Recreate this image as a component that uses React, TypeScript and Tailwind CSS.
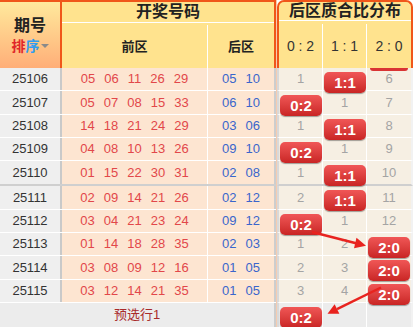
import React from 'react';

type Cell = string | { badge: string };

interface DrawRow {
  no: string;
  front: string[];
  back: string[];
  ratio: Cell[];
}

const rows: DrawRow[] = [
  { no: '25106', front: ['05', '06', '11', '26', '29'], back: ['05', '10'], ratio: ['1', { badge: '1:1' }, '6'] },
  { no: '25107', front: ['05', '07', '08', '15', '33'], back: ['06', '10'], ratio: [{ badge: '0:2' }, '1', '7'] },
  { no: '25108', front: ['14', '18', '21', '24', '29'], back: ['03', '06'], ratio: ['1', { badge: '1:1' }, '8'] },
  { no: '25109', front: ['04', '08', '10', '13', '26'], back: ['09', '10'], ratio: [{ badge: '0:2' }, '1', '9'] },
  { no: '25110', front: ['01', '15', '22', '30', '31'], back: ['02', '08'], ratio: ['1', { badge: '1:1' }, '10'] },
  { no: '25111', front: ['02', '09', '14', '21', '26'], back: ['02', '12'], ratio: ['2', { badge: '1:1' }, '11'] },
  { no: '25112', front: ['03', '04', '21', '23', '24'], back: ['09', '12'], ratio: [{ badge: '0:2' }, '1', '12'] },
  { no: '25113', front: ['01', '14', '18', '28', '35'], back: ['02', '03'], ratio: ['1', '2', { badge: '2:0' }] },
  { no: '25114', front: ['03', '08', '09', '12', '16'], back: ['01', '05'], ratio: ['2', '3', { badge: '2:0' }] },
  { no: '25115', front: ['03', '12', '14', '21', '35'], back: ['01', '05'], ratio: ['3', '4', { badge: '2:0' }] },
];

const Badge = ({ text }: { text: string }) => (
  <div className="absolute left-[1px] top-[4px] w-[42px] h-[21px] rounded-[5px] bg-gradient-to-b from-[#f05656] to-[#c92424] shadow-[0_1px_1px_rgba(0,0,0,0.35)] flex items-center justify-center text-white text-[15px] font-bold leading-none z-10">
    {text}
  </div>
);

const RatioCell = ({ cell, last }: { cell: Cell; last: boolean }) => (
  <div className={`relative flex items-center justify-center text-[13px] text-[#a4a4a4] ${last ? '' : 'border-r border-white'}`}>
    {typeof cell === 'string' ? cell : <Badge text={cell.badge} />}
  </div>
);

export default function App() {
  return (
    <div className="relative w-[413px] h-[327px] overflow-hidden bg-white flex font-['Liberation_Sans','Noto_Sans_CJK_SC',sans-serif] text-[#222]">
      {/* left table */}
      <div className="w-[276px] flex flex-col">
        <div className="h-[68px] flex border-t-2 border-[#f0561a]">
          <div className="w-[62px] border-r-2 border-[#f0561a] bg-gradient-to-b from-[#ffe99c] to-[#ffae78] flex flex-col items-center justify-center">
            <div className="text-[16px] font-bold leading-none">期号</div>
            <div className="mt-[5px] flex items-center text-[14px] font-bold leading-none">
              <span className="text-[#e0262a]">排</span>
              <span className="text-[#2f9cf0]">序</span>
              <span className="ml-[1px] w-0 h-0 border-x-[4px] border-x-transparent border-t-[4px] border-t-[#8a8a8a]" />
            </div>
          </div>
          <div className="flex-1 flex flex-col bg-[#ffe38e] border-r-2 border-[#f0561a]">
            <div className="h-[21px] border-b border-white flex items-center justify-center text-[16px] font-bold">开奖号码</div>
            <div className="flex-1 flex pt-[2px] text-[13px] font-bold">
              <div className="w-[146px] border-r border-white flex items-center justify-center">前区</div>
              <div className="flex-1 flex items-center justify-center">后区</div>
            </div>
          </div>
        </div>

        {rows.map((r, i) => (
          <div
            key={r.no}
            className={`h-[23.3px] flex text-[13px] ${i === 4 ? 'h-[25.3px] border-b-2 border-[#cfcfcf]' : 'border-b border-white'}`}
          >
            <div className="w-[62px] border-r-2 border-[#c9c9c9] bg-[#efefef] flex items-center justify-center text-[#333]">{r.no}</div>
            <div className="w-[146px] border-r border-white bg-[#fde5d1] flex items-center justify-center gap-[9px] text-[#e2474a]">
              {r.front.map((n, j) => (
                <span key={j}>{n}</span>
              ))}
            </div>
            <div className="flex-1 border-r-2 border-[#cdcdcd] bg-[#fde5d1] flex items-center justify-center gap-[9px] text-[#3a66cc]">
              {r.back.map((n, j) => (
                <span key={j}>{n}</span>
              ))}
            </div>
          </div>
        ))}

        <div className="flex-1 bg-[#ececec] border-r-2 border-[#cdcdcd] flex items-center justify-center text-[13px] text-[#a82a2a]">预选行1</div>
      </div>

      <div className="w-[1px] bg-[#f5cbb0]" />

      {/* right panel */}
      <div className="w-[136px] flex flex-col">
        <div className="h-[68px] border-2 border-b-0 border-[#f0561a] rounded-t-[7px] bg-[#ffe38e] flex flex-col">
          <div className="h-[19px] border-b border-white flex items-center justify-center text-[16px] font-bold">后区质合比分布</div>
          <div className="flex-1 grid grid-cols-3 text-[14px] text-[#333] pt-[3px]">
            <div className="border-r border-white flex items-center justify-center">0 : 2</div>
            <div className="border-r border-white flex items-center justify-center">1 : 1</div>
            <div className="flex items-center justify-center">2 : 0</div>
          </div>
        </div>

        {rows.map((r, i) => (
          <div
            key={r.no}
            className={`relative grid grid-cols-3 border-l-2 border-r-2 border-l-[#d9d9d9] border-r-[#f2f2f2] bg-[#f6efe3] ${i === 4 ? 'h-[25.3px] border-b-2 border-b-[#cfcfcf]' : 'h-[23.3px] border-b border-b-white'}`}
          >
            {r.ratio.map((c, j) => (
              <RatioCell key={j} cell={c} last={j === 2} />
            ))}
            {i === 0 && <div className="absolute top-0 right-[3px] w-[38px] h-[3px] rounded-b-[3px] bg-[#d93434]" />}
          </div>
        ))}

        <div className="flex-1 grid grid-cols-3 border-l-2 border-r-2 border-l-[#d9d9d9] border-r-[#f2f2f2] bg-[#ececec]">
          <RatioCell cell={{ badge: '0:2' }} last={false} />
          <div className="border-r border-white" />
          <div />
        </div>
      </div>

      {/* trend arrows */}
      <svg className="absolute inset-0 pointer-events-none z-20" width="413" height="327" viewBox="0 0 413 327">
        <line x1="312" y1="232" x2="357" y2="243.5" stroke="#e8231f" strokeWidth="2.5" />
        <polygon points="366,245.8 356.5,237.8 354,248.2" fill="#e8231f" />
        <line x1="381" y1="287.5" x2="337" y2="309.2" stroke="#e8231f" strokeWidth="2.5" />
        <polygon points="327.5,313.8 334.6,304.2 339.4,313.8" fill="#e8231f" />
      </svg>
    </div>
  );
}
